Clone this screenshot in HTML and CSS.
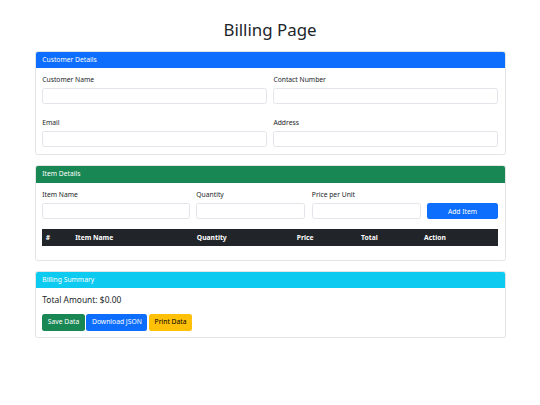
FILE: index.html
```html
<!DOCTYPE html>
<html lang="en">

<head>
    <meta charset="UTF-8">
    <meta name="viewport" content="width=device-width, initial-scale=1.0">
    <title>Billing Page</title>
    <link rel="stylesheet" href="styles.css">
</head>

<body>
    <div class="page">
        <h1 class="pageTitle">Billing Page</h1>

        <div class="card">
            <div class="cardHeader headerBlue">Customer Details</div>
            <div class="cardBody customerGrid">
                <div class="field">
                    <label for="customerName">Customer Name</label>
                    <input type="text" id="customerName">
                </div>
                <div class="field">
                    <label for="contactNumber">Contact Number</label>
                    <input type="text" id="contactNumber">
                </div>
                <div class="field">
                    <label for="email">Email</label>
                    <input type="email" id="email">
                </div>
                <div class="field">
                    <label for="address">Address</label>
                    <input type="text" id="address">
                </div>
            </div>
        </div>

        <div class="card">
            <div class="cardHeader headerGreen">Item Details</div>
            <div class="cardBody">
                <div class="itemGrid">
                    <div class="field">
                        <label for="itemName">Item Name</label>
                        <input type="text" id="itemName">
                    </div>
                    <div class="field">
                        <label for="quantity">Quantity</label>
                        <input type="number" id="quantity">
                    </div>
                    <div class="field">
                        <label for="price">Price per Unit</label>
                        <input type="number" id="price">
                    </div>
                    <button class="btn btnBlue addBtn">Add Item</button>
                </div>
                <table class="itemTable">
                    <thead>
                        <tr>
                            <th class="colNum">#</th>
                            <th class="colName">Item Name</th>
                            <th class="colQty">Quantity</th>
                            <th class="colPrice">Price</th>
                            <th class="colTotal">Total</th>
                            <th>Action</th>
                        </tr>
                    </thead>
                    <tbody id="itemRows"></tbody>
                </table>
            </div>
        </div>

        <div class="card">
            <div class="cardHeader headerCyan">Billing Summary</div>
            <div class="cardBody">
                <h5 class="totalText">Total Amount: $<span id="total">0.00</span></h5>
                <div class="actions">
                    <button class="btn btnGreen">Save Data</button>
                    <button class="btn btnBlue">Download JSON</button>
                    <button class="btn btnYellow">Print Data</button>
                </div>
            </div>
        </div>
    </div>
</body>
</html>
```

FILE: styles.css
```css
* {
  box-sizing: border-box;
}

body {
  margin: 0;
  font-family: "Noto Sans", "Open Sans", sans-serif;
  font-size: 6.75px;
  line-height: 1.5;
  color: #212529;
  background: #fff;
}

.page {
  width: 471px;
  margin: 20.25px auto 0;
}

.pageTitle {
  margin: 0 0 10.125px;
  font-size: 16.875px;
  font-weight: 400;
  line-height: 1.2;
  text-align: center;
}

.card {
  border: 1px solid #e3e4e6;
  border-radius: 2.5px;
  margin-bottom: 10.125px;
  background: #fff;
}

.cardHeader {
  padding: 3.2px 6.75px;
  color: #fff;
  border-radius: 2px 2px 0 0;
}

.headerBlue {
  background-color: #0d6efd;
}

.headerGreen {
  background-color: #198754;
}

.headerCyan {
  background-color: #0dcaf0;
}

.cardBody {
  padding: 6.75px;
}

.customerGrid {
  display: grid;
  grid-template-columns: 1fr 1fr;
  column-gap: 6.75px;
  row-gap: 13.5px;
}

.field label {
  display: block;
  margin-bottom: 3.375px;
  line-height: 10.125px;
}

.field input {
  display: block;
  width: 100%;
  height: 16px;
  padding: 0 5px;
  font-family: inherit;
  font-size: 6.75px;
  border: 1px solid #e2e5e9;
  border-radius: 2.5px;
  background: #fff;
}

.itemGrid {
  display: grid;
  grid-template-columns: 147.3px 108.75px 108.75px 1fr;
  column-gap: 6.75px;
}

.btn {
  padding: 2.5px 4.5px;
  font-family: inherit;
  font-size: 6.75px;
  line-height: 1.5;
  border: 1px solid transparent;
  border-radius: 2.5px;
  cursor: pointer;
}

.addBtn {
  align-self: end;
  width: 100%;
  height: 16px;
}

.btnBlue {
  background-color: #0d6efd;
  color: #fff;
}

.btnGreen {
  background-color: #198754;
  color: #fff;
}

.btnYellow {
  background-color: #ffc107;
  color: #000;
}

.itemTable {
  width: 100%;
  margin: 10.125px 0 6.75px;
  border-collapse: collapse;
  table-layout: fixed;
}

.itemTable th {
  padding: 3.375px;
  background-color: #212529;
  color: #fff;
  font-weight: 700;
  text-align: left;
  line-height: 10.125px;
}

.colNum {
  width: 29.5px;
}

.colName {
  width: 121.7px;
}

.colQty {
  width: 100px;
}

.colPrice {
  width: 64.3px;
}

.colTotal {
  width: 63px;
}

.totalText {
  margin: 0 0 3.375px;
  font-size: 8.4375px;
  font-weight: 400;
  line-height: 1.2;
}

.actions {
  display: flex;
  gap: 1.8px;
  margin-top: 8.5px;
}
```
